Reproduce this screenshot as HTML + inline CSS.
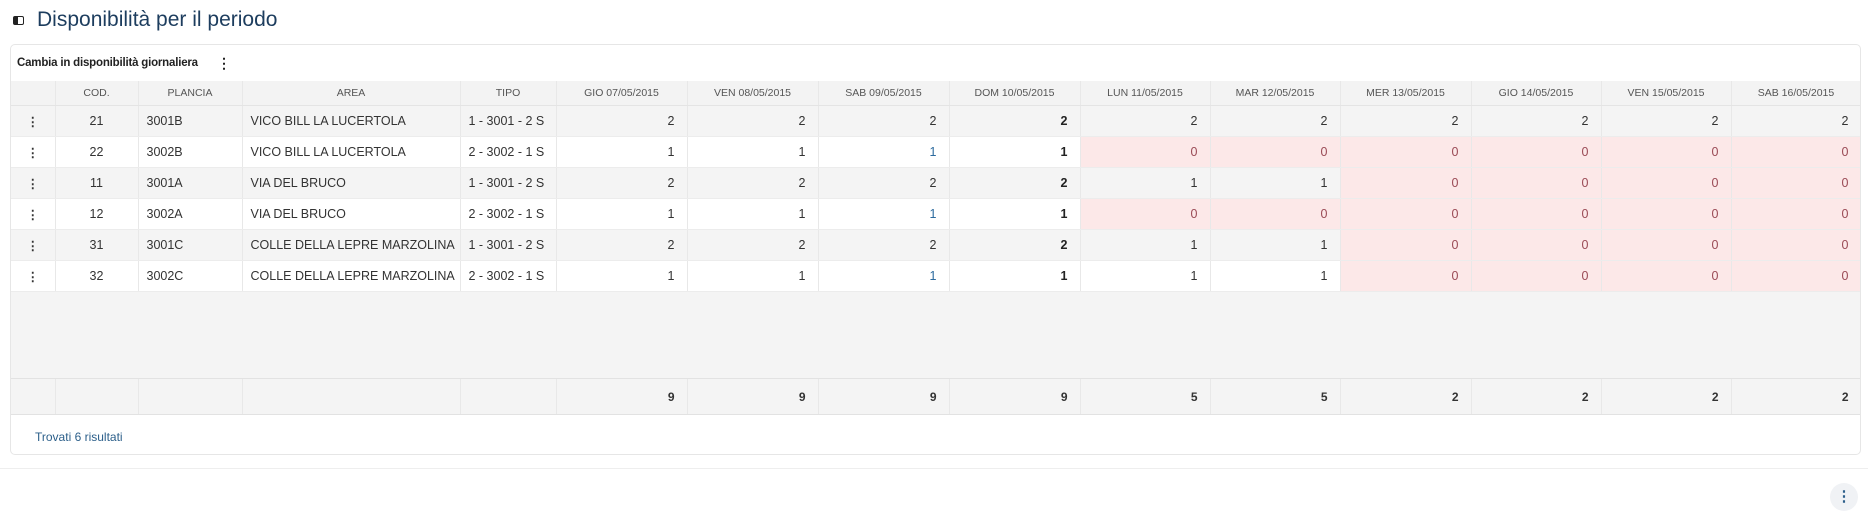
<!DOCTYPE html>
<html><head><meta charset="utf-8"><style>
body{margin:0;width:1868px;height:513px;background:#fff;font-family:"Liberation Sans",sans-serif;position:relative;overflow:hidden;color:#333}
.title{position:absolute;left:37px;top:8px;font-size:21px;color:#1d3d5e}
.ticon{position:absolute;left:13px;top:16px;width:11px;height:9px;border:1.5px solid #222;border-radius:2px;box-sizing:border-box}
.ticon:before{content:"";position:absolute;left:0;top:0;width:4px;height:100%;background:#222}
.card{position:absolute;left:10px;top:44px;width:1851px;height:411px;border:1px solid #e6e6e6;border-radius:5px;box-sizing:border-box;overflow:hidden}
.cambia{position:absolute;left:6px;top:12px;font-size:11.5px;color:#222;font-weight:bold;letter-spacing:-0.2px}
.kb{position:absolute;left:206px;top:10px;font-size:14px;font-weight:bold;color:#222}
table{position:absolute;left:0;top:36px;border-collapse:collapse;table-layout:fixed;width:1850px}
td,th{border-right:1px solid #e8e8e8;padding:0 8px;font-size:12.5px;white-space:nowrap;overflow:hidden}
th{height:24px;font-weight:normal;font-size:10.5px;color:#555;background:#f3f3f3;text-align:center;border-bottom:1px solid #e4e4e4}
td{height:30px;border-bottom:1px solid #ececec}
tr.g td{background:#f4f4f4}
tr.w td{background:#fff}
td.n{text-align:right;padding-right:12px}
td.c{text-align:center}
td.b{font-weight:bold;color:#222}
td.p{background:#fce8e8!important;color:#9a4a55}
td.bl{color:#2c6a9e}
.dots{font-weight:bold;text-align:center;color:#333}
.empty td{height:86px;background:#f4f4f4;border-bottom:1px solid #e2e2e2}
.foot td{height:35px;background:#f4f4f4;font-weight:bold;font-size:12px;border-bottom:1px solid #e2e2e2}
.trov{position:absolute;left:24px;top:385px;font-size:12px;color:#2c5f8a}
.line{position:absolute;left:0;top:468px;width:1868px;height:1px;background:#eee}
.fab{position:absolute;left:1830px;top:483px;width:28px;height:28px;border-radius:50%;background:#f0f2f5;color:#2c5f8a;font-weight:bold;text-align:center;line-height:28px;font-size:15px}
</style></head><body>
<div class="ticon"></div>
<div class="title">Disponibilità per il periodo</div>
<div class="card">
<div class="cambia">Cambia in disponibilità giornaliera</div>
<div class="kb">⋮</div>
<table>
<colgroup><col style="width:44px"><col style="width:83px"><col style="width:104px"><col style="width:218px"><col style="width:96px"><col style="width:131px"><col style="width:131px"><col style="width:131px"><col style="width:131px"><col style="width:130px"><col style="width:130px"><col style="width:131px"><col style="width:130px"><col style="width:130px"><col style="width:130px"></colgroup>
<tr><th></th><th>COD.</th><th>PLANCIA</th><th>AREA</th><th>TIPO</th><th>GIO 07/05/2015</th><th>VEN 08/05/2015</th><th>SAB 09/05/2015</th><th>DOM 10/05/2015</th><th>LUN 11/05/2015</th><th>MAR 12/05/2015</th><th>MER 13/05/2015</th><th>GIO 14/05/2015</th><th>VEN 15/05/2015</th><th>SAB 16/05/2015</th></tr>
<tr class="g"><td class="dots">⋮</td><td class="c">21</td><td>3001B</td><td>VICO BILL LA LUCERTOLA</td><td>1 - 3001 - 2 S</td><td class="n">2</td><td class="n">2</td><td class="n">2</td><td class="n b">2</td><td class="n">2</td><td class="n">2</td><td class="n">2</td><td class="n">2</td><td class="n">2</td><td class="n">2</td></tr>
<tr class="w"><td class="dots">⋮</td><td class="c">22</td><td>3002B</td><td>VICO BILL LA LUCERTOLA</td><td>2 - 3002 - 1 S</td><td class="n">1</td><td class="n">1</td><td class="n bl">1</td><td class="n b">1</td><td class="n p">0</td><td class="n p">0</td><td class="n p">0</td><td class="n p">0</td><td class="n p">0</td><td class="n p">0</td></tr>
<tr class="g"><td class="dots">⋮</td><td class="c">11</td><td>3001A</td><td>VIA DEL BRUCO</td><td>1 - 3001 - 2 S</td><td class="n">2</td><td class="n">2</td><td class="n">2</td><td class="n b">2</td><td class="n">1</td><td class="n">1</td><td class="n p">0</td><td class="n p">0</td><td class="n p">0</td><td class="n p">0</td></tr>
<tr class="w"><td class="dots">⋮</td><td class="c">12</td><td>3002A</td><td>VIA DEL BRUCO</td><td>2 - 3002 - 1 S</td><td class="n">1</td><td class="n">1</td><td class="n bl">1</td><td class="n b">1</td><td class="n p">0</td><td class="n p">0</td><td class="n p">0</td><td class="n p">0</td><td class="n p">0</td><td class="n p">0</td></tr>
<tr class="g"><td class="dots">⋮</td><td class="c">31</td><td>3001C</td><td>COLLE DELLA LEPRE MARZOLINA</td><td>1 - 3001 - 2 S</td><td class="n">2</td><td class="n">2</td><td class="n">2</td><td class="n b">2</td><td class="n">1</td><td class="n">1</td><td class="n p">0</td><td class="n p">0</td><td class="n p">0</td><td class="n p">0</td></tr>
<tr class="w"><td class="dots">⋮</td><td class="c">32</td><td>3002C</td><td>COLLE DELLA LEPRE MARZOLINA</td><td>2 - 3002 - 1 S</td><td class="n">1</td><td class="n">1</td><td class="n bl">1</td><td class="n b">1</td><td class="n">1</td><td class="n">1</td><td class="n p">0</td><td class="n p">0</td><td class="n p">0</td><td class="n p">0</td></tr>
<tr class="empty"><td colspan="15" style="border-right:none"></td></tr>
<tr class="foot"><td></td><td></td><td></td><td></td><td></td><td class="n">9</td><td class="n">9</td><td class="n">9</td><td class="n">9</td><td class="n">5</td><td class="n">5</td><td class="n">2</td><td class="n">2</td><td class="n">2</td><td class="n">2</td></tr>
</table>
<div class="trov">Trovati 6 risultati</div>
</div>
<div class="line"></div>
<div class="fab">⋮</div>
</body></html>
